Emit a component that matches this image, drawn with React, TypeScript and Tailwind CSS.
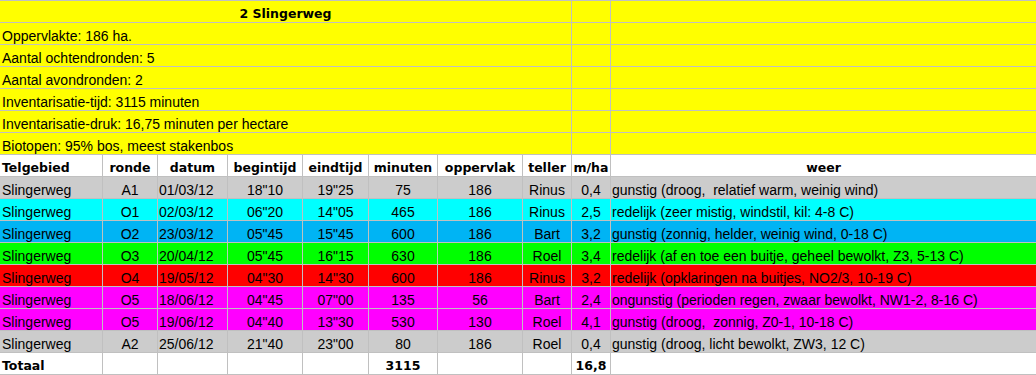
const info = [
  "Oppervlakte: 186 ha.",
  "Aantal ochtendronden: 5",
  "Aantal avondronden: 2",
  "Inventarisatie-tijd: 3115 minuten",
  "Inventarisatie-druk: 16,75 minuten per hectare",
  "Biotopen: 95% bos, meest stakenbos",
];

const headers = ["ronde", "begintijd", "eindtijd", "minuten", "oppervlak", "teller", "m/ha"];

const rows = [
  { bg: "bg-[#cccccc]", r: ["A1", "01/03/12", '18"10', '19"25', "75", "186", "Rinus", "0,4"], weer: "gunstig (droog,  relatief warm, weinig wind)" },
  { bg: "bg-[#00ffff]", r: ["O1", "02/03/12", '06"20', '14"05', "465", "186", "Rinus", "2,5"], weer: "redelijk (zeer mistig, windstil, kil: 4-8 C)" },
  { bg: "bg-[#00b4f4]", r: ["O2", "23/03/12", '05"45', '15"45', "600", "186", "Bart", "3,2"], weer: "gunstig (zonnig, helder, weinig wind, 0-18 C)" },
  { bg: "bg-[#00ff00]", r: ["O3", "20/04/12", '05"45', '16"15', "630", "186", "Roel", "3,4"], weer: "redelijk (af en toe een buitje, geheel bewolkt, Z3, 5-13 C)" },
  { bg: "bg-[#ff0000]", r: ["O4", "19/05/12", '04"30', '14"30', "600", "186", "Rinus", "3,2"], weer: "redelijk (opklaringen na buitjes, NO2/3, 10-19 C)" },
  { bg: "bg-[#ff00ff]", r: ["O5", "18/06/12", '04"45', '07"00', "135", "56", "Bart", "2,4"], weer: "ongunstig (perioden regen, zwaar bewolkt, NW1-2, 8-16 C)" },
  { bg: "bg-[#ff00ff]", r: ["O5", "19/06/12", '04"40', '13"30', "530", "130", "Roel", "4,1"], weer: "gunstig (droog,  zonnig, Z0-1, 10-18 C)" },
  { bg: "bg-[#cccccc]", r: ["A2", "25/06/12", '21"40', '23"00', "80", "186", "Roel", "0,4"], weer: "gunstig (droog, licht bewolkt, ZW3, 12 C)" },
];

const cell = "h-[21px] overflow-hidden whitespace-pre pt-[4px] leading-[18px] text-[14px] text-black";
const bold = "h-[21px] overflow-hidden whitespace-pre pt-[4px] leading-[18px] text-[12.5px] font-bold text-black font-['DejaVu_Sans',sans-serif]";

export default function App() {
  return (
    <div className="w-[1036px] h-[375px] overflow-hidden bg-white font-['Liberation_Sans',Arial,sans-serif]">
      <div className="grid grid-cols-[102px_54px_69px_74px_65px_68px_84px_48px_38px_425px] auto-rows-[21px] gap-px bg-[#c0c0c0] py-px">
        {/* titel */}
        <div className={`${bold} col-span-8 bg-[#ffff00] text-center`}>2 Slingerweg</div>
        <div className="bg-[#ffff00]" />
        <div className="bg-[#ffff00]" />

        {info.map((t) => (
          <div key={t} className="contents">
            <div className={`${cell} col-span-8 bg-[#ffff00] pl-[2px]`}>{t}</div>
            <div className="bg-[#ffff00]" />
            <div className="bg-[#ffff00]" />
          </div>
        ))}

        {/* kop */}
        <div className={`${bold} bg-white pl-[2px]`}>Telgebied</div>
        <div className={`${bold} bg-white text-center`}>{headers[0]}</div>
        <div className={`${bold} bg-white text-center`}>datum</div>
        {headers.slice(1).map((h) => (
          <div key={h} className={`${bold} bg-white text-center`}>{h}</div>
        ))}
        <div className={`${bold} bg-white text-center`}>weer</div>

        {rows.map((row, i) => (
          <div key={i} className="contents">
            <div className={`${cell} ${row.bg} pl-[2px]`}>Slingerweg</div>
            {row.r.map((v, j) => (
              <div key={j} className={`${cell} ${row.bg} ${j === 1 ? "pl-[1px]" : "text-center"}`}>{v}</div>
            ))}
            <div className={`${cell} ${row.bg} pl-[1px]`}>{row.weer}</div>
          </div>
        ))}

        {/* totaal */}
        <div className={`${bold} bg-white pl-[2px]`}>Totaal</div>
        <div className="bg-white" />
        <div className="bg-white" />
        <div className="bg-white" />
        <div className="bg-white" />
        <div className={`${bold} bg-white text-center`}>3115</div>
        <div className="bg-white" />
        <div className="bg-white" />
        <div className={`${bold} bg-white text-center`}>16,8</div>
        <div className="bg-white" />
      </div>
    </div>
  );
}
